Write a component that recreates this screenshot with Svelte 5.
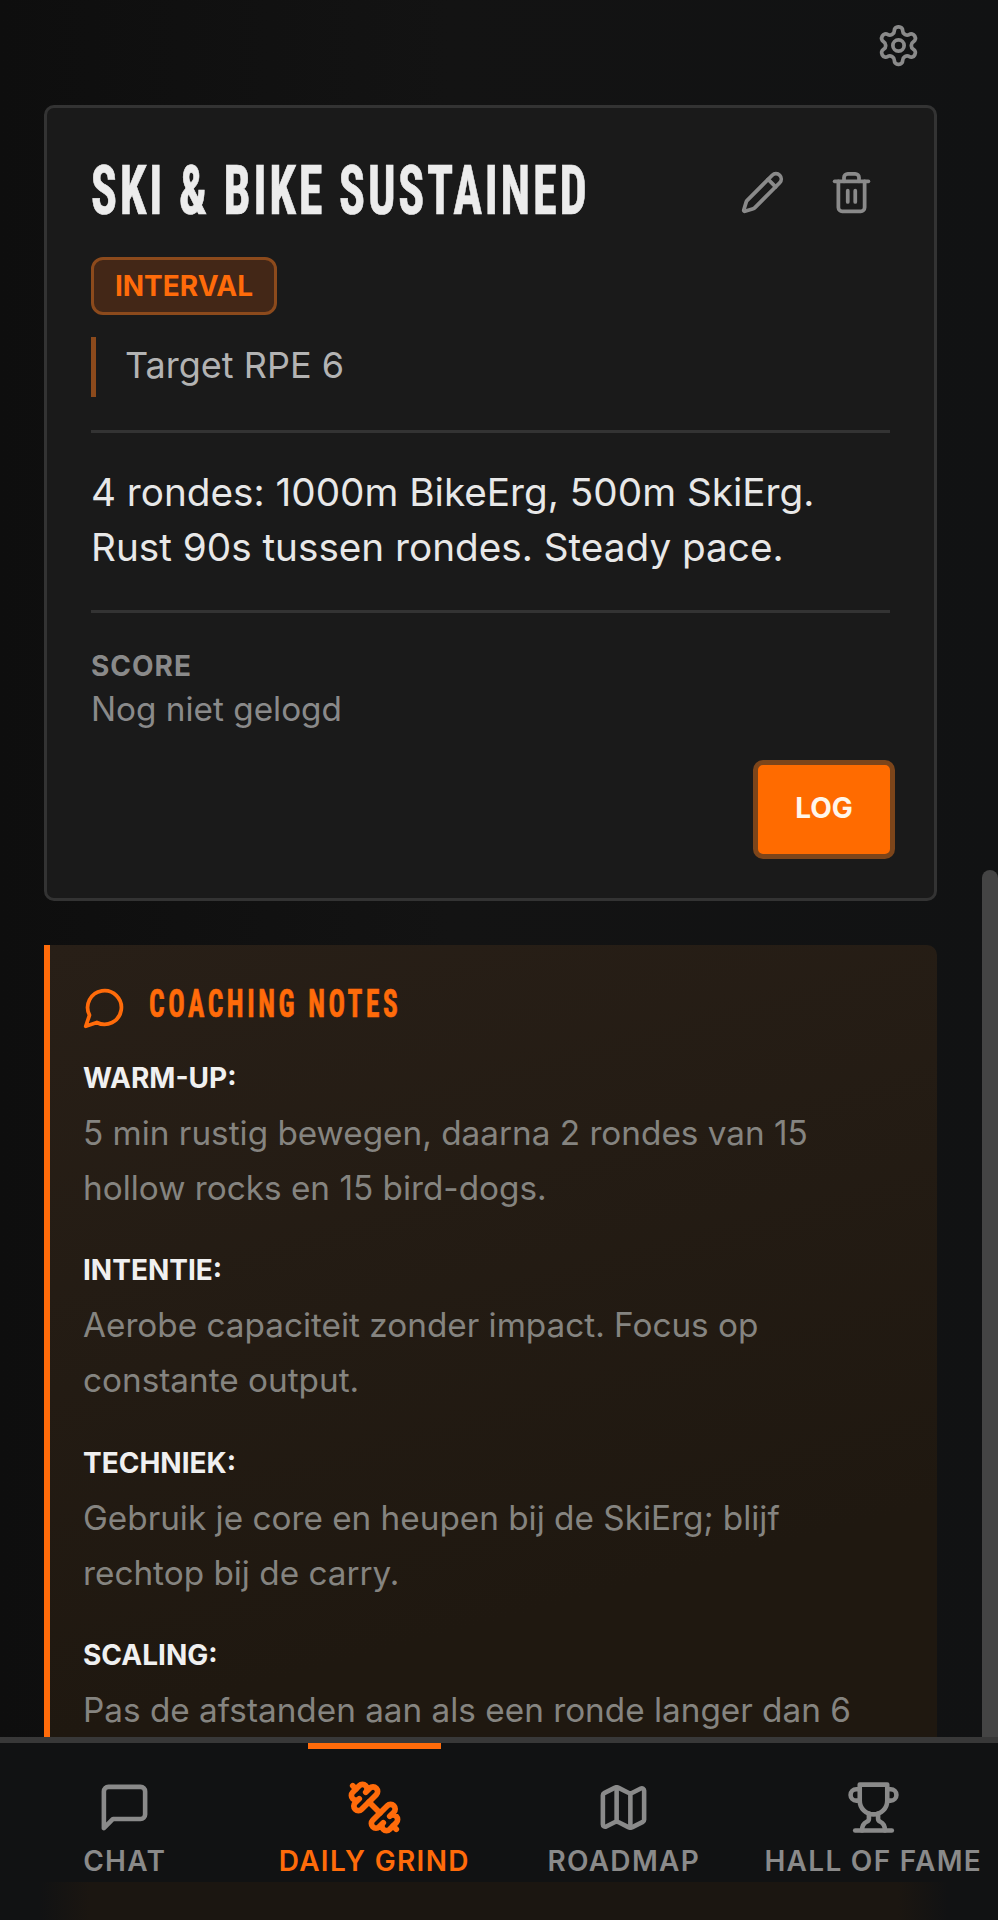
<script>
  const notes = [
    { label: 'WARM-UP:', text: '5 min rustig bewegen, daarna 2 rondes van 15 hollow rocks en 15 bird-dogs.' },
    { label: 'INTENTIE:', text: 'Aerobe capaciteit zonder impact. Focus op constante output.' },
    { label: 'TECHNIEK:', text: 'Gebruik je core en heupen bij de SkiErg; blijf rechtop bij de carry.' },
    { label: 'SCALING:', text: 'Pas de afstanden aan als een ronde langer dan 6' }
  ];
</script>

<div class="app">
  <main class="main">
    <div class="top">
      <svg class="icon" viewBox="0 0 24 24"><path d="M12.22 2h-.44a2 2 0 0 0-2 2v.18a2 2 0 0 1-1 1.73l-.43.25a2 2 0 0 1-2 0l-.15-.08a2 2 0 0 0-2.73.73l-.22.38a2 2 0 0 0 .73 2.73l.15.1a2 2 0 0 1 1 1.72v.51a2 2 0 0 1-1 1.74l-.15.09a2 2 0 0 0-.73 2.73l.22.38a2 2 0 0 0 2.73.73l.15-.08a2 2 0 0 1 2 0l.43.25a2 2 0 0 1 1 1.73V20a2 2 0 0 0 2 2h.44a2 2 0 0 0 2-2v-.18a2 2 0 0 1 1-1.73l.43-.25a2 2 0 0 1 2 0l.15.08a2 2 0 0 0 2.73-.73l.22-.39a2 2 0 0 0-.73-2.73l-.15-.08a2 2 0 0 1-1-1.74v-.5a2 2 0 0 1 1-1.74l.15-.09a2 2 0 0 0 .73-2.73l-.22-.38a2 2 0 0 0-2.73-.73l-.15.08a2 2 0 0 1-2 0l-.43-.25a2 2 0 0 1-1-1.73V4a2 2 0 0 0-2-2z"/><circle cx="12" cy="12" r="3"/></svg>
    </div>

    <section class="card">
      <div class="head">
        <h1>SKI &amp; BIKE SUSTAINED</h1>
        <div class="actions">
          <svg class="icon" viewBox="0 0 24 24"><path d="M21.174 6.812a1 1 0 0 0-3.986-3.987L3.842 16.174a2 2 0 0 0-.5.83l-1.321 4.352a.5.5 0 0 0 .623.622l4.353-1.32a2 2 0 0 0 .83-.497z"/><path d="m15 5 4 4"/></svg>
          <svg class="icon" viewBox="0 0 24 24"><path d="M3 6h18"/><path d="M19 6v14c0 1-1 2-2 2H7c-1 0-2-1-2-2V6"/><path d="M8 6V4c0-1 1-2 2-2h4c1 0 2 1 2 2v2"/><line x1="10" x2="10" y1="11" y2="17"/><line x1="14" x2="14" y1="11" y2="17"/></svg>
        </div>
      </div>
      <span class="badge">INTERVAL</span>
      <p class="target">Target RPE 6</p>
      <p class="desc">4 rondes: 1000m BikeErg, 500m SkiErg.<br />Rust 90s tussen rondes. Steady pace.</p>
      <div class="score">
        <div class="score-label">SCORE</div>
        <div class="score-value">Nog niet gelogd</div>
      </div>
      <div class="log-row"><button class="log">LOG</button></div>
    </section>

    <section class="notes">
      <div class="notes-head">
        <svg class="icon orange" viewBox="0 0 24 24"><path d="M7.9 20A9 9 0 1 0 4 16.1L2 22Z"/></svg>
        <h2>COACHING NOTES</h2>
      </div>
      {#each notes as n}
        <div class="note">
          <div class="note-label">{n.label}</div>
          <p>{n.text}</p>
        </div>
      {/each}
    </section>
    <div class="scrollbar"></div>
  </main>

  <nav class="nav">
    <div class="item">
      <svg class="nav-icon" viewBox="0 0 24 24"><path d="M21 15a2 2 0 0 1-2 2H7l-4 4V5a2 2 0 0 1 2-2h14a2 2 0 0 1 2 2z"/></svg>
      <span>CHAT</span>
    </div>
    <div class="item active">
      <i class="indicator"></i>
      <svg class="nav-icon" viewBox="0 0 24 24"><path d="M14.4 14.4 9.6 9.6"/><path d="M18.657 21.485a2 2 0 1 1-2.829-2.828l-1.767 1.768a2 2 0 1 1-2.829-2.829l6.364-6.364a2 2 0 1 1 2.829 2.829l-1.768 1.767a2 2 0 1 1 2.828 2.829z"/><path d="m21.5 21.5-1.4-1.4"/><path d="M3.9 3.9 2.5 2.5"/><path d="M6.404 12.768a2 2 0 1 1-2.829-2.829l1.768-1.767a2 2 0 1 1-2.828-2.829l2.828-2.828a2 2 0 1 1 2.829 2.828l1.767-1.768a2 2 0 1 1 2.829 2.829z"/></svg>
      <span>DAILY GRIND</span>
    </div>
    <div class="item">
      <svg class="nav-icon" viewBox="0 0 24 24"><path d="M14.106 5.553a2 2 0 0 0 1.788 0l3.659-1.83A1 1 0 0 1 21 4.619v12.764a1 1 0 0 1-.553.894l-4.553 2.277a2 2 0 0 1-1.788 0l-4.212-2.106a2 2 0 0 0-1.788 0l-3.659 1.83A1 1 0 0 1 3 19.381V6.618a1 1 0 0 1 .553-.894l4.553-2.277a2 2 0 0 1 1.788 0z"/><path d="M15 5.764v15"/><path d="M9 3.236v15"/></svg>
      <span>ROADMAP</span>
    </div>
    <div class="item">
      <svg class="nav-icon" viewBox="0 0 24 24"><path d="M6 9H4.5a2.5 2.5 0 0 1 0-5H6"/><path d="M18 9h1.5a2.5 2.5 0 0 0 0-5H18"/><path d="M4 22h16"/><path d="M10 14.66V17c0 .55-.47.98-.97 1.21C7.85 18.75 7 20.24 7 22"/><path d="M14 14.66V17c0 .55.47.98.97 1.21C16.15 18.75 17 20.24 17 22"/><path d="M18 2H6v7a6 6 0 0 0 12 0V2Z"/></svg>
      <span>HALL OF FAME</span>
    </div>
  </nav>
</div>

<style>
  :global(body) { margin: 0; background: #121212; }
  .app {
    width: 998px; height: 1920px; display: flex; flex-direction: column; overflow: hidden;
    font-family: Inter, "Liberation Sans", sans-serif;
    background: linear-gradient(90deg, #0e0e0e 0, #131313 45%, #111213 100%);
  }
  .main { flex: 1; min-height: 0; overflow: hidden; position: relative; padding: 0 61px 0 44px; }
  .top { height: 105px; display: flex; justify-content: flex-end; padding: 23px 0 0; box-sizing: border-box; margin-right: 16px; }
  .icon { width: 45px; height: 45px; fill: none; stroke: #8a8a8a; stroke-width: 2; stroke-linecap: round; stroke-linejoin: round; flex: none; display: block; }
  .orange { stroke: #ff6b0a; }

  .card { background: #1a1a1a; border: 3px solid #333; border-radius: 10px; height: 796px; box-sizing: border-box; padding: 52px 44px 0; }
  .head { display: flex; justify-content: space-between; align-items: center; height: 64px; }
  h1, h2 { margin: 0; font-family: "Roboto Condensed", "Liberation Sans", sans-serif; font-weight: 700; white-space: nowrap; transform-origin: left center; flex: 1; min-width: 0; -webkit-text-stroke: 0.7px currentColor; }
  h1 { font-size: 68px; line-height: 64px; letter-spacing: 3.9px; color: #ececec; transform: scaleX(.71); position: relative; top: -1px; }
  .actions { display: flex; gap: 44px; margin-right: 16px; }
  .badge { display: inline-block; margin-top: 33px; box-sizing: border-box; width: 186px; height: 58px; line-height: 52px; text-align: center; background: #432717; border: 3px solid #8c4a1c; border-radius: 12px; color: #ff6b0a; font-size: 28px; font-weight: 700; }
  .target { margin: 22px 0 0; border-left: 5px solid #8c4a1c; padding-left: 29px; height: 60px; line-height: 56px; font-size: 36px; color: #b3b3b3; }
  .desc { margin: 33px 0 0; padding: 32px 0 35px; border-top: 3px solid #333; border-bottom: 3px solid #333; font-size: 38.7px; line-height: 55px; color: #e8e8e8; }
  .score { margin-top: 33px; }
  .score-label { font-size: 28px; font-weight: 700; color: #8a8a8a; line-height: 40px; letter-spacing: 1px; }
  .score-value { font-size: 33.3px; color: #8a8a8a; line-height: 46px; }
  .log-row { display: flex; justify-content: flex-end; margin: 28px -5px 0 0; }
  .log { width: 142px; height: 99px; box-sizing: border-box; background: #ff6b00; border: 5px solid #7d451a; border-radius: 10px; color: #fff6ea; font: 700 28px Inter, sans-serif; padding: 0 0 3px; }

  .notes { margin-top: 44px; height: 900px; box-sizing: border-box; background: linear-gradient(165deg, #281f17 0, #1f1810 70%); border-left: 6px solid #ff6b0a; border-radius: 0 10px 10px 0; padding: 32px 40px 0 33px; }
  .notes-head { display: flex; align-items: center; gap: 22px; height: 60px; margin-left: -1px; }
  h2 { color: #ff6b0a; font-size: 38px; line-height: 60px; letter-spacing: 5px; transform: scaleX(.72); position: relative; top: -3px; }
  .note { height: 192.4px; box-sizing: border-box; padding-top: 21px; }
  .note-label { color: #f0f0f0; font-size: 28px; font-weight: 700; line-height: 40px; }
  .note p { margin: 8px 0 0; font-size: 33.3px; line-height: 55px; color: #858480; }

  .scrollbar { position: absolute; right: 0; top: 870px; bottom: 0; width: 16px; background: #444; border-radius: 8px 8px 0 0; }

  .nav { flex: none; height: 183px; box-sizing: border-box; border-top: 6px solid #383838; display: grid; grid-template-columns: repeat(4, 1fr); background: linear-gradient(90deg, transparent 4%, #1b1611 9%, #1b1611 90%, transparent 95%) 0 100% / 100% 38px no-repeat, #111213; }
  .item { position: relative; display: flex; flex-direction: column; align-items: center; padding-top: 37px; color: #8a8a8a; font-size: 28px; font-weight: 600; letter-spacing: 1.3px; white-space: nowrap; }
  .item span { margin-top: 8px; line-height: 36px; }
  .nav-icon { width: 55px; height: 55px; fill: none; stroke: currentColor; stroke-width: 2; stroke-linecap: round; stroke-linejoin: round; display: block; }
  .active { color: #ff6b0a; }
  .active .nav-icon { stroke-width: 2.5; }
  .indicator { position: absolute; top: 0; left: 58px; width: 133px; height: 6px; background: #ff6b0a; }
</style>
